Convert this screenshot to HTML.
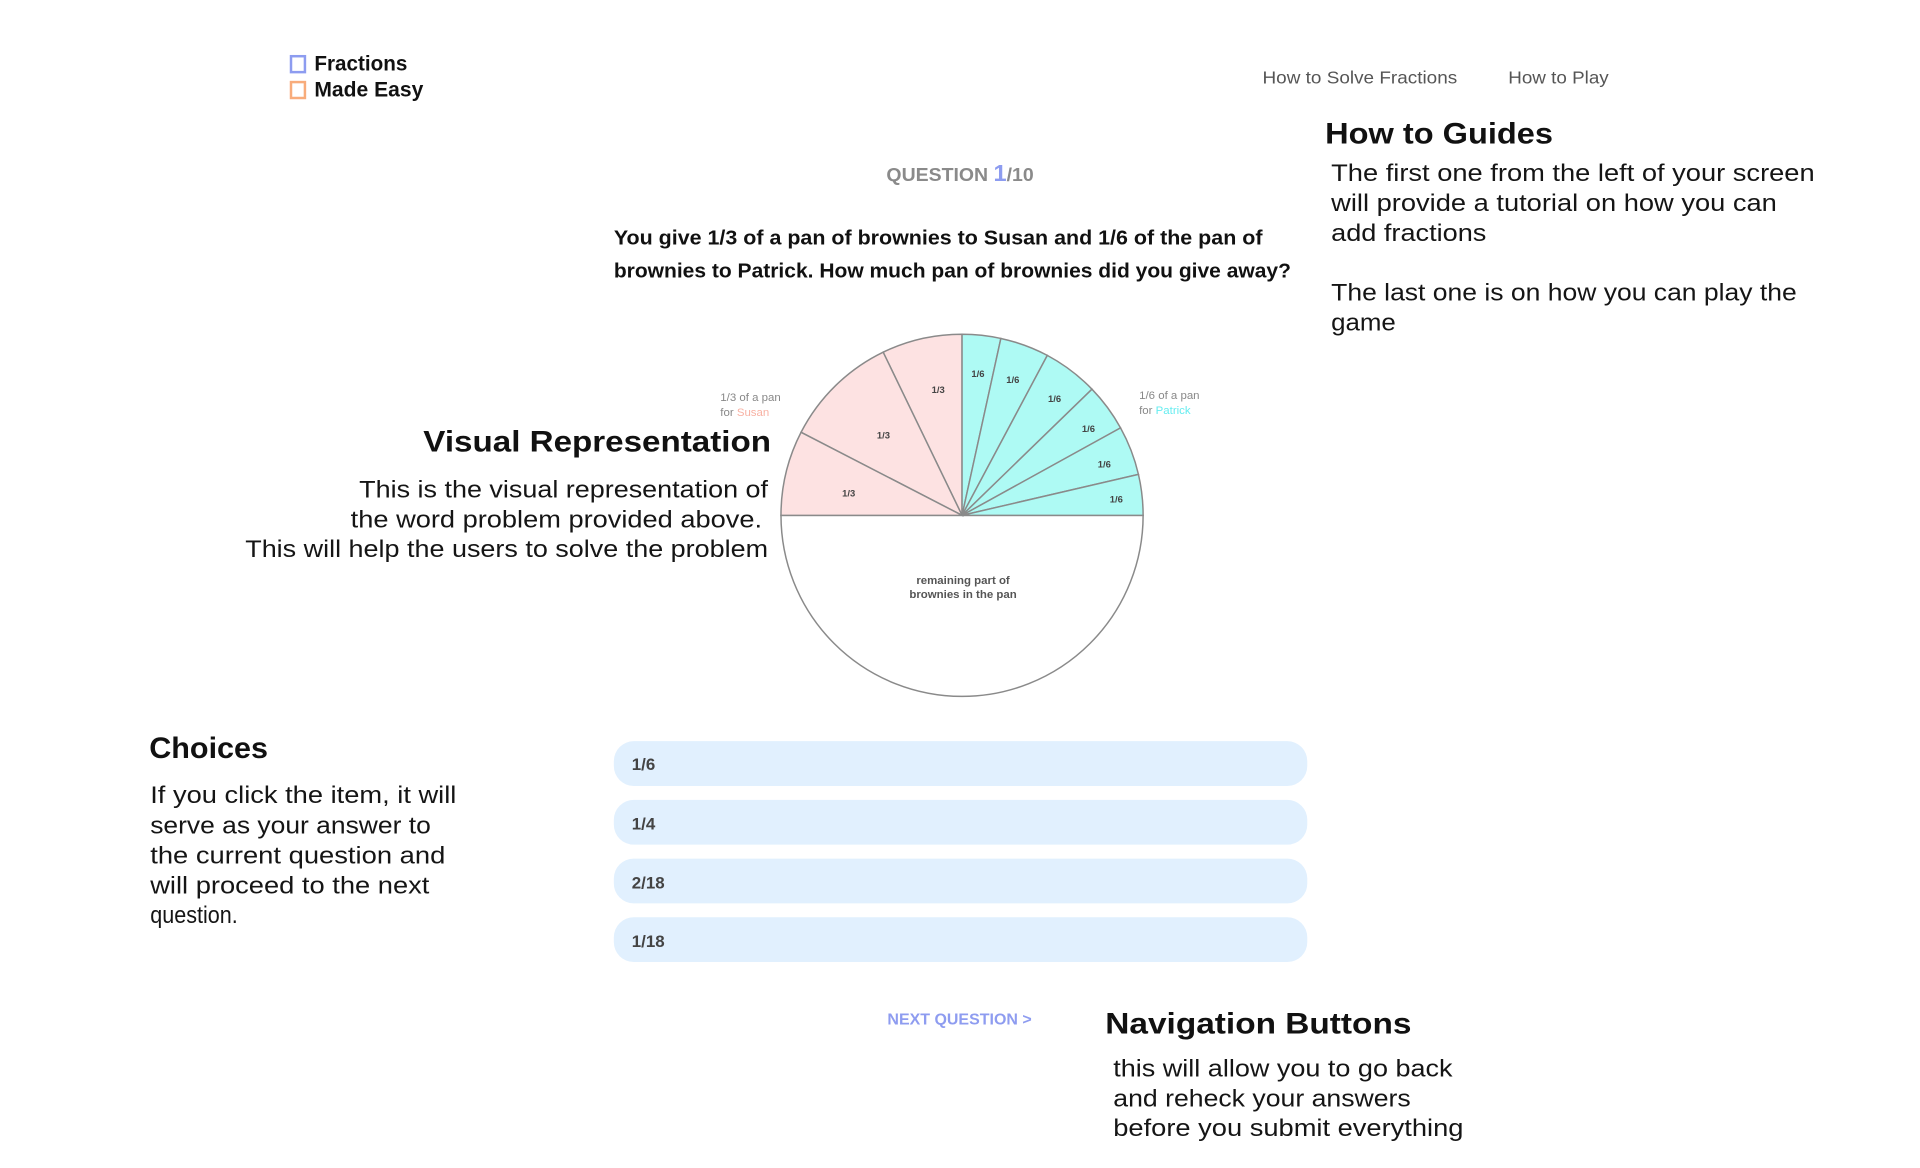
<!DOCTYPE html>
<html><head><meta charset="utf-8"><style>
html,body{margin:0;padding:0;background:#fff;width:1920px;height:1168px;overflow:hidden}
svg{display:block}
text{font-family:"Liberation Sans",sans-serif}
.b{font-weight:bold}
.body{font-size:24px;fill:#151515}
.h{font-size:30px;font-weight:bold;fill:#111}
</style></head><body>
<svg width="1920" height="1168" viewBox="0 0 1920 1168" xmlns="http://www.w3.org/2000/svg">
<g transform="scale(0.99488)">
<!-- logo -->
<rect x="292.5" y="56.5" width="14" height="16" fill="none" stroke="#8d9cf0" stroke-width="2.5"/>
<rect x="292.5" y="82.5" width="14" height="16" fill="none" stroke="#f8ac7b" stroke-width="2.5"/>
<text x="316" y="71" class="b" font-size="21" fill="#111" textLength="93.5" lengthAdjust="spacingAndGlyphs">Fractions</text>
<text x="316" y="97" class="b" font-size="21" fill="#111" textLength="109.5" lengthAdjust="spacingAndGlyphs">Made Easy</text>
<!-- nav -->
<text x="1269" y="84" font-size="17.5" fill="#555" textLength="195.7" lengthAdjust="spacingAndGlyphs">How to Solve Fractions</text>
<text x="1516" y="84" font-size="17.5" fill="#555" textLength="101" lengthAdjust="spacingAndGlyphs">How to Play</text>
<!-- How to guides -->
<text x="1332" y="144" class="h" textLength="229" lengthAdjust="spacingAndGlyphs">How to Guides</text>
<g class="body">
<text x="1338" y="182" textLength="486" lengthAdjust="spacingAndGlyphs">The first one from the left of your screen</text>
<text x="1338" y="212" textLength="448" lengthAdjust="spacingAndGlyphs">will provide a tutorial on how you can</text>
<text x="1338" y="242" textLength="156" lengthAdjust="spacingAndGlyphs">add fractions</text>
<text x="1338" y="302" textLength="468" lengthAdjust="spacingAndGlyphs">The last one is on how you can play the</text>
<text x="1338" y="332" textLength="65" lengthAdjust="spacingAndGlyphs">game</text>
</g>
<!-- question -->
<text x="891" y="182" class="b" font-size="19" fill="#8a8a8a" textLength="148" lengthAdjust="spacingAndGlyphs">QUESTION <tspan fill="#8d9cf0" font-size="23">1</tspan>/10</text>
<text x="617" y="246" class="b" font-size="20" fill="#111" textLength="652" lengthAdjust="spacingAndGlyphs">You give 1/3 of a pan of brownies to Susan and 1/6 of the pan of</text>
<text x="617" y="279" class="b" font-size="20" fill="#111" textLength="680.6" lengthAdjust="spacingAndGlyphs">brownies to Patrick. How much pan of brownies did you give away?</text>
<!-- visual representation -->
<text x="425.5" y="454" class="h" textLength="349.5" lengthAdjust="spacingAndGlyphs">Visual Representation</text>
<g class="body">
<text x="361" y="500" textLength="411" lengthAdjust="spacingAndGlyphs">This is the visual representation of</text>
<text x="352.5" y="530" textLength="413.5" lengthAdjust="spacingAndGlyphs">the word problem provided above.</text>
<text x="246.5" y="560" textLength="525.5" lengthAdjust="spacingAndGlyphs">This will help the users to solve the problem</text>
</g>
<!-- pie -->
<g transform="translate(2,0)">
<g stroke="#8a8a8a" stroke-width="1.5">
<path d="M965 518 L1147 518 A182 182 0 0 1 783 518 Z" fill="#fff"/>
<path d="M965 518 L965 336 A182 182 0 0 0 885.7 354 Z" fill="#fde2e2"/>
<path d="M965 518 L885.7 354 A182 182 0 0 0 803.2 434.5 Z" fill="#fde2e2"/>
<path d="M965 518 L803.2 434.5 A182 182 0 0 0 783 518 Z" fill="#fde2e2"/>
<path d="M965 518 L965 336 A182 182 0 0 1 1004 340.2 Z" fill="#aefaf4"/>
<path d="M965 518 L1004 340.2 A182 182 0 0 1 1050.7 357.2 Z" fill="#aefaf4"/>
<path d="M965 518 L1050.7 357.2 A182 182 0 0 1 1095.6 391.2 Z" fill="#aefaf4"/>
<path d="M965 518 L1095.6 391.2 A182 182 0 0 1 1124.3 430.1 Z" fill="#aefaf4"/>
<path d="M965 518 L1124.3 430.1 A182 182 0 0 1 1142.3 476.8 Z" fill="#aefaf4"/>
<path d="M965 518 L1142.3 476.8 A182 182 0 0 1 1147 518 Z" fill="#aefaf4"/>
</g>
<g font-size="9.5" class="b" fill="#444" text-anchor="middle">
<text x="941" y="395">1/3</text><text x="886" y="441">1/3</text><text x="851" y="499">1/3</text>
<text x="981" y="379">1/6</text><text x="1016" y="385">1/6</text><text x="1058" y="404">1/6</text>
<text x="1092" y="434">1/6</text><text x="1108" y="470">1/6</text><text x="1120" y="505">1/6</text>
</g>
<g font-size="11.5" class="b" fill="#555" text-anchor="middle">
<text x="966" y="587">remaining part of</text><text x="966" y="601">brownies in the pan</text>
</g>
<g font-size="11.5" fill="#888">
<text x="722" y="403">1/3 of a pan</text><text x="722" y="418">for <tspan fill="#f8b1a3">Susan</tspan></text>
<text x="1143" y="401">1/6 of a pan</text><text x="1143" y="416">for <tspan fill="#66edf0">Patrick</tspan></text>
</g>
</g>
<!-- choices -->
<text x="150" y="762" class="h" textLength="119.4" lengthAdjust="spacingAndGlyphs">Choices</text>
<g class="body">
<text x="151" y="807" textLength="307.7" lengthAdjust="spacingAndGlyphs">If you click the item, it will</text>
<text x="151" y="838" textLength="282" lengthAdjust="spacingAndGlyphs">serve as your answer to</text>
<text x="151" y="868" textLength="296.6" lengthAdjust="spacingAndGlyphs">the current question and</text>
<text x="151" y="898" textLength="280.6" lengthAdjust="spacingAndGlyphs">will proceed to the next</text>
<text x="151" y="928" textLength="88" lengthAdjust="spacingAndGlyphs">question.</text>
</g>
<g fill="#e1f0fe">
<rect x="617" y="745" width="697" height="45" rx="20"/>
<rect x="617" y="804" width="697" height="45" rx="20"/>
<rect x="617" y="863" width="697" height="45" rx="20"/>
<rect x="617" y="922" width="697" height="45" rx="20"/>
</g>
<g class="b" font-size="17" fill="#444">
<text x="635" y="774">1/6</text><text x="635" y="834">1/4</text><text x="635" y="893">2/18</text><text x="635" y="952">1/18</text>
</g>
<!-- nav buttons -->
<text x="892" y="1030" class="b" font-size="16" fill="#8e9cf0" textLength="145" lengthAdjust="spacingAndGlyphs">NEXT QUESTION &gt;</text>
<text x="1111" y="1039" class="h" textLength="307.7" lengthAdjust="spacingAndGlyphs">Navigation Buttons</text>
<g class="body">
<text x="1119" y="1082" textLength="341" lengthAdjust="spacingAndGlyphs">this will allow you to go back</text>
<text x="1119" y="1112" textLength="299" lengthAdjust="spacingAndGlyphs">and reheck your answers</text>
<text x="1119" y="1142" textLength="352" lengthAdjust="spacingAndGlyphs">before you submit everything</text>
</g>
</g>
</svg>
</body></html>
